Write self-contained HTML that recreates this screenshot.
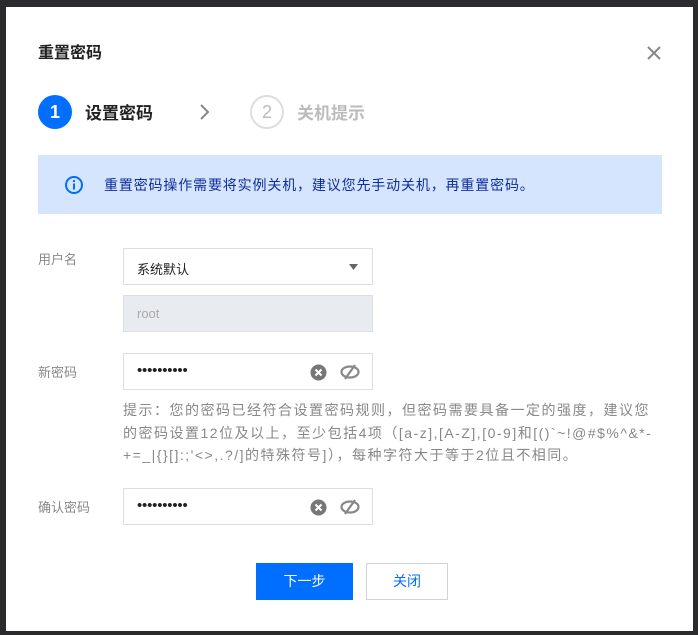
<!DOCTYPE html>
<html><head><meta charset="utf-8"><style>
*{margin:0;padding:0;box-sizing:border-box}
body{width:698px;height:635px;background:#2b2b2d;position:relative;overflow:hidden;font-family:"Liberation Sans","Noto Sans CJK SC",sans-serif}
.p{position:absolute;left:6px;top:7px;width:687px;height:624px;background:#fff}
.a{position:absolute;white-space:nowrap}
.inp{position:absolute;left:123px;width:250px;height:37px;border:1px solid #dcdfe4;background:#fff}
.lbl{position:absolute;left:38px;font-size:13px;color:#888}
.dots{position:absolute;left:13px;top:8px;font-size:15px;color:#222;letter-spacing:-0.2px}
</style></head><body>
<div class="p"></div>
<div class="a" style="left:38px;top:39px;font-size:16px;font-weight:bold;color:#222">重置密码</div>
<svg class="a" style="left:645px;top:44px" width="20" height="20"><path d="M3 3L15 15M15 3L3 15" stroke="#888" stroke-width="2"/></svg>
<div class="a" style="left:38px;top:95px;width:34px;height:34px;border-radius:50%;background:#006eff;color:#fff;font-size:18px;font-weight:bold;text-align:center;line-height:34px">1</div>
<div class="a" style="left:85px;top:99px;font-size:17px;font-weight:bold;color:#222">设置密码</div>
<svg class="a" style="left:197px;top:103px" width="16" height="18"><path d="M4 2L11 9L4 16" stroke="#888" stroke-width="2" fill="none"/></svg>
<div class="a" style="left:250px;top:95px;width:34px;height:34px;border-radius:50%;border:2px solid #ddd;color:#bbb;font-size:18px;text-align:center;line-height:30px">2</div>
<div class="a" style="left:297px;top:99px;font-size:17px;font-weight:bold;color:#bbb">关机提示</div>
<div class="a" style="left:38px;top:155px;width:624px;height:59px;background:#d4e5fd"></div>
<svg class="a" style="left:64px;top:175px" width="20" height="20"><circle cx="10" cy="10" r="8" fill="none" stroke="#006eff" stroke-width="2"/><rect x="9" y="8.5" width="2" height="6" fill="#006eff"/><rect x="9" y="5" width="2" height="2" fill="#006eff"/></svg>
<div class="a" style="left:104px;top:175px;font-size:14px;color:#0f2d9e;letter-spacing:0.85px">重置密码操作需要将实例关机，建议您先手动关机，再重置密码。</div>
<div class="lbl" style="top:249px">用户名</div>
<div class="inp" style="top:248px"><span class="a" style="left:13px;top:10px;font-size:13px;color:#222">系统默认</span><svg class="a" style="left:225px;top:15px" width="9" height="7"><path d="M0 0H9L4.5 6Z" fill="#666"/></svg></div>
<div class="inp" style="top:295px;background:#e8ebef"><span class="a" style="left:13px;top:10px;font-size:13px;color:#aaa">root</span></div>
<div class="lbl" style="top:362px">新密码</div>
<div class="inp" style="top:353px"><span class="dots">••••••••••</span>
<svg class="a" style="left:186px;top:10px" width="17" height="17"><circle cx="8.5" cy="8.5" r="8" fill="#777"/><path d="M5.5 5.5L11.5 11.5M11.5 5.5L5.5 11.5" stroke="#fff" stroke-width="2"/></svg>
<svg class="a" style="left:216px;top:9px" width="20" height="18"><ellipse cx="10" cy="9" rx="8.5" ry="5.5" fill="none" stroke="#888" stroke-width="2.2"/><path d="M15 2L5 16" stroke="#888" stroke-width="2.2"/></svg></div>
<div class="a" style="left:123px;top:399px;font-size:14px;color:#888;line-height:22.5px;white-space:nowrap;letter-spacing:1.5px">提示：您的密码已经符合设置密码规则，但密码需要具备一定的强度，建议您<br>的密码设置12位及以上，至少包括4项（[a-z],[A-Z],[0-9]和[()`~!@#$%^&amp;*-<br>+=_|{}[]:;'&lt;&gt;,.?/]的特殊符号]），每种字符大于等于2位且不相同。</div>
<div class="lbl" style="top:497px">确认密码</div>
<div class="inp" style="top:488px"><span class="dots">••••••••••</span>
<svg class="a" style="left:186px;top:10px" width="17" height="17"><circle cx="8.5" cy="8.5" r="8" fill="#777"/><path d="M5.5 5.5L11.5 11.5M11.5 5.5L5.5 11.5" stroke="#fff" stroke-width="2"/></svg>
<svg class="a" style="left:216px;top:9px" width="20" height="18"><ellipse cx="10" cy="9" rx="8.5" ry="5.5" fill="none" stroke="#888" stroke-width="2.2"/><path d="M15 2L5 16" stroke="#888" stroke-width="2.2"/></svg></div>
<div class="a" style="left:256px;top:563px;width:97px;height:37px;background:#006eff;color:#fff;font-size:14px;text-align:center;line-height:37px">下一步</div>
<div class="a" style="left:366px;top:563px;width:82px;height:37px;border:1px solid #d0d4da;color:#006eff;font-size:14px;text-align:center;line-height:35px">关闭</div>
</body></html>
